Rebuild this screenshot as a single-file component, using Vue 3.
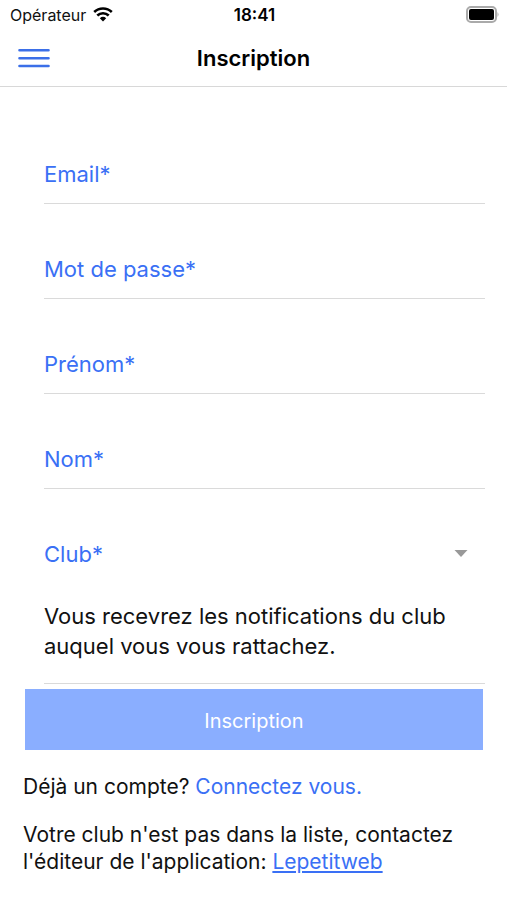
<script setup>
import { reactive } from 'vue'

const fields = [
  { id: 'email', label: 'Email*', type: 'email' },
  { id: 'password', label: 'Mot de passe*', type: 'password' },
  { id: 'firstname', label: 'Prénom*', type: 'text' },
  { id: 'lastname', label: 'Nom*', type: 'text' },
]

const form = reactive({ email: '', password: '', firstname: '', lastname: '', club: '' })
</script>

<template>
  <div class="screen">
    <div class="status">
      <div class="carrier">
        <span>Opérateur</span>
        <svg class="wifi" viewBox="0 0 20 15" aria-hidden="true">
          <path d="M1.200 5a12.800 12.800 0 0 1 17.600 0" />
          <path d="M4.300 8.500a8.200 8.200 0 0 1 11.400 0" />
          <path class="dot" d="M6.800 11.300a4.700 4.700 0 0 1 6.400 0L10 14.600z" />
        </svg>
      </div>
      <span class="time">18:41</span>
      <svg class="battery" viewBox="0 0 34 17" aria-hidden="true">
        <rect class="shell" x="2" y="1" width="29" height="15" rx="4" />
        <rect x="4" y="3" width="25" height="11" rx="2" />
        <path class="tip" d="M32.500 6q2 2.500 0 5z" />
      </svg>
    </div>

    <header class="bar">
      <button class="menu" type="button" aria-label="Menu">
        <svg viewBox="0 0 32 20" aria-hidden="true">
          <path d="M1.500 2.300h29M1.500 10.200h29M1.500 18h29" />
        </svg>
      </button>
      <h1>Inscription</h1>
    </header>

    <main>
      <form @submit.prevent>
        <div class="fields">
          <div v-for="f in fields" :key="f.id" class="field">
            <div class="control">
              <label :for="f.id" :class="{ filled: form[f.id] }">{{ f.label }}</label>
              <input :id="f.id" v-model="form[f.id]" :type="f.type" />
            </div>
          </div>
          <div class="field">
            <div class="control">
              <label for="club">Club*</label>
              <select id="club" v-model="form.club">
                <option value=""></option>
              </select>
              <svg class="arrow" viewBox="0 0 14 7" aria-hidden="true"><path d="M0.500 0h13L7 7z" /></svg>
            </div>
            <p class="hint">Vous recevrez les notifications du club auquel vous vous rattachez.</p>
          </div>
        </div>
        <button class="submit" type="submit">Inscription</button>
      </form>

      <div class="notes">
        <p>Déjà un compte? <a class="login" href="#">Connectez vous.</a></p>
        <p>Votre club n'est pas dans la liste, contactez l'éditeur de l'application: <a href="#">Lepetitweb</a></p>
      </div>
    </main>
  </div>
</template>

<style>
body {
  background: #fff;
}
</style>

<style scoped>
.screen {
  font-family: Inter, "Liberation Sans", sans-serif;
  color: #111;
  font-size: 22px;
}
.status {
  display: grid;
  grid-template-columns: 1fr auto 1fr;
  align-items: center;
  height: 29px;
  padding: 0 8px 0 10px;
  font-size: 16px;
}
.carrier {
  display: flex;
  align-items: center;
  gap: 7px;
}
.wifi {
  width: 20px;
  height: 15px;
  fill: none;
  stroke: #000;
  stroke-width: 2.6;
}
.wifi .dot {
  fill: #000;
  stroke: none;
}
.time {
  font-size: 17px;
  font-weight: 600;
  color: #000;
}
.battery {
  justify-self: end;
  width: 34px;
  height: 17px;
}
.shell {
  fill: none;
  stroke: #aaa;
  stroke-width: 2;
}
.tip {
  fill: #aaa;
}
.bar {
  display: grid;
  grid-template-columns: 1fr auto 1fr;
  align-items: center;
  height: 57px;
  padding: 0 18px;
  border-bottom: 1px solid #d8d8d8;
}
.menu {
  justify-self: start;
  display: flex;
  padding: 0;
  border: 0;
  background: none;
}
.menu svg {
  width: 32px;
  height: 20px;
  fill: none;
  stroke: #3b6fe8;
  stroke-width: 2.6;
  stroke-linecap: round;
}
h1 {
  margin: 0;
  font-size: 22px;
  font-weight: 600;
  color: #000;
}
form {
  padding: 22px 22px 0 25px;
}
.fields {
  padding-left: 19px;
}
.field {
  padding-top: 35px;
  border-bottom: 1px solid #dadada;
}
.control {
  display: grid;
  align-items: center;
  height: 59px;
}
.control > * {
  grid-area: 1 / 1;
}
label {
  color: #3a70f5;
  pointer-events: none;
  z-index: 1;
}
label.filled {
  visibility: hidden;
}
input,
select {
  width: 100%;
  height: 100%;
  padding: 0;
  border: 0;
  outline: 0;
  background: none;
  appearance: none;
  font: inherit;
  color: inherit;
}
.arrow {
  justify-self: end;
  width: 14px;
  height: 7px;
  margin-right: 17px;
  fill: #999;
  pointer-events: none;
}
.hint {
  margin: 0;
  padding: 18px 0 22px;
  line-height: 30px;
}
.submit {
  display: block;
  width: calc(100% - 2px);
  height: 61px;
  margin-top: 5px;
  padding: 2px 0 0;
  border: 0;
  background: #8aaeff;
  color: #fff;
  font: inherit;
  font-size: 20px;
}
.notes {
  display: flex;
  flex-direction: column;
  gap: 21px;
  padding: 23px;
  font-size: 21px;
  line-height: 27px;
}
.notes p {
  margin: 0;
}
a {
  color: #3a70f5;
}
.login {
  text-decoration: none;
}
</style>
